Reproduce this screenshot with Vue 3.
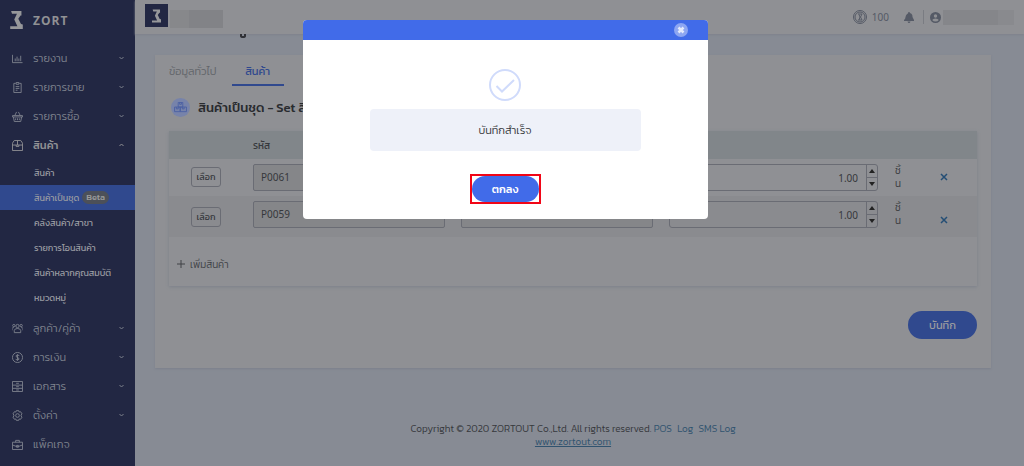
<script setup>
import { ref } from 'vue'

const mainMenu = [
  { label: 'รายงาน', icon: 'chart', open: false },
  { label: 'รายการขาย', icon: 'clip', open: false },
  { label: 'รายการซื้อ', icon: 'basket', open: false },
  { label: 'สินค้า', icon: 'box', open: true },
]
const subMenu = ['สินค้า', 'สินค้าเป็นชุด', 'คลังสินค้า/สาขา', 'รายการโอนสินค้า', 'สินค้าหลากคุณสมบัติ', 'หมวดหมู่']
const moreMenu = [
  { label: 'ลูกค้า/คู่ค้า', icon: 'people', arrow: true },
  { label: 'การเงิน', icon: 'money', arrow: true },
  { label: 'เอกสาร', icon: 'drawer', arrow: true },
  { label: 'ตั้งค่า', icon: 'gear', arrow: true },
  { label: 'แพ็คเกจ', icon: 'case', arrow: false },
]
const logoPath = 'M1 0h11.500v5h-1L9 8.500l3 6 2 .5v5H0v-3h8L4.500 9.500 7.500 3H2z'
const icons = {
  chart: 'M.5 2v8.500h11M3.500 9V6M5.500 9V4M7.500 9V6M9.500 9V3',
  clip: 'M4 1.500H2v10h8v-10H8M4.500.5h3v2h-3zM4 5h4M4 7h4M4 9h2',
  basket: 'M0.500 5h11v1.500h-11zM1.500 6.500l1 5h7l1-5M3 5l2-4M9 5L7 1M4 8v2M6 8v2M8 8v2',
  box: 'M2.500.5h7l2 3v8H.5v-8zM.5 5.500h11M6 .5v5M4.500 5.500v1.500h3V5.500',
  people: 'M6 1.500a1.800 1.800 0 1 1 0 3.600a1.800 1.800 0 1 1 0-3.600M2 1.500a1.300 1.300 0 1 1 0 2.600a1.300 1.300 0 1 1 0-2.600M10 1.500a1.300 1.300 0 1 1 0 2.600a1.300 1.300 0 1 1 0-2.600M2.500 10.500V8Q3 6 6 6t3.500 2v2.500zM0 8V6q0-1 2-1M12 8V6q0-1-2-1',
  money: 'M6 .5a5.500 5.500 0 1 1 0 11a5.500 5.500 0 1 1 0-11M8 4Q6 2.700 4.600 3.800Q4 5.500 6 6T7.600 8Q6 9.500 4 8M6 2.500v7',
  drawer: 'M.5.5h11v11H.5zM.5 4.500h11M.5 8h11M4.500 2.500h3M4.500 6.200h3M4.500 9.800h3',
  gear: 'M4.700.7h2.600l.5 1.500 1.600-.3 1.500 2.300-1 1.300v1l1 1.300-1.500 2.300-1.600-.3-.5 1.500H4.700l-.5-1.500-1.600.3L1.100 7.800l1-1.300v-1l-1-1.300 1.500-2.300 1.600.3zM6 4a2 2 0 1 1 0 4a2 2 0 1 1 0-4',
  case: 'M.5 3.500h11v8H.5zM4 3.500v-2h4v2M.5 6.500l4 1.500h3l4-1.500M5 7h2v2H5z',
}
const rows = ref([
  { code: 'P0061', name: '', qty: '1.00' },
  { code: 'P0059', name: '', qty: '1.00' },
])
const open = ref(true)
</script>

<template>
  <div class="app">
    <aside class="side">
      <a class="brand" href="#">
        <svg class="logo" viewBox="0 0 14 20"><path :d="logoPath" /></svg>
        <span>ZORT</span>
      </a>
      <nav>
        <a v-for="m in mainMenu" :key="m.label" href="#" class="item" :class="{ on: m.open }">
          <svg class="ico" viewBox="0 0 12 12"><path :d="icons[m.icon]" /></svg>
          <span>{{ m.label }}</span>
          <svg class="arrow" viewBox="0 0 5 4"><path :d="m.open ? 'M.5 3L2.500 1l2 2' : 'M.5 1l2 2 2-2'" /></svg>
        </a>
        <div class="subs">
          <a v-for="(s, i) in subMenu" :key="s" href="#" class="sub" :class="{ active: i === 1 }">
            {{ s }}<span v-if="i === 1" class="beta">Beta</span>
          </a>
        </div>
        <a v-for="m in moreMenu" :key="m.label" href="#" class="item">
          <svg class="ico" viewBox="0 0 12 12"><path :d="icons[m.icon]" /></svg>
          <span>{{ m.label }}</span>
          <svg v-if="m.arrow" class="arrow" viewBox="0 0 5 4"><path d="M.5 1l2 2 2-2" /></svg>
        </a>
      </nav>
    </aside>

    <div class="content">
      <header class="top">
        <span class="square"><svg class="logo" viewBox="0 0 14 20"><path :d="logoPath" /></svg></span>
        <span class="mask shop"></span>
        <span class="tools">
          <svg class="coin" viewBox="0 0 14 14"><circle cx="7" cy="7" r="6.500" /><circle cx="7" cy="7" r="5" /><path d="M5 4h4L7.500 7 9 10H5M6 4.500L7 7l-1 3" /></svg>
          <span class="credit">100</span>
          <svg class="bell" viewBox="0 0 10 11"><path d="M4.300 0h1.400v1C8 1.500 8.500 3 8.500 5t1.500 3v1H0V8q1.500-1 1.500-3T4.300 1zM3.500 9.500h3Q6 11 5 11T3.500 9.500" /></svg>
          <span class="bar"></span>
          <svg class="user" viewBox="0 0 11 11"><circle cx="5.500" cy="5.500" r="5.500" /><circle class="cut" cx="5.500" cy="4" r="1.700" /><path class="cut" d="M2.200 8Q3 6.400 5.500 6.400T8.800 8Q7.500 9.500 5.500 9.500T2.200 8" /></svg>
          <span class="mask"></span>
        </span>
      </header>

      <main>
        <div class="titlebar"><svg viewBox="0 0 8 4"><path d="M2 0v2q0 1 2 1t2-1V0" /></svg></div>
        <section class="card">
          <div class="tabs">
            <a href="#" class="tab">ข้อมูลทั่วไป</a>
            <a href="#" class="tab current">สินค้า</a>
          </div>
          <h2>
            <span class="round"><svg viewBox="0 0 14 12"><path d="M4.500.5h5v5h-5zM.5 5.500h6.200v5H.5zM6.700 5.500h6.800v5H6.700zM6 .5v2h2v-2M2.500 5.500v2h2v-2M9 5.500v2h2v-2" /></svg></span>
            สินค้าเป็นชุด - Set สินค้า
          </h2>
          <div class="panel">
            <table>
              <colgroup><col class="c1"><col class="c2"><col class="c2"><col><col class="c5"><col class="c6"></colgroup>
              <thead>
                <tr><th></th><th>รหัส</th><th></th><th></th><th></th><th></th></tr>
              </thead>
              <tbody>
                <tr v-for="r in rows" :key="r.code">
                  <td class="pick"><button type="button">เลือก</button></td>
                  <td><input v-model="r.code" class="field" readonly aria-label="รหัส"></td>
                  <td><input v-model="r.name" class="field" readonly aria-label="สินค้า"></td>
                  <td>
                    <div class="number">
                      <input v-model="r.qty" aria-label="จำนวน">
                      <span class="spin">
                        <button type="button" aria-label="เพิ่ม"><svg viewBox="0 0 6 4"><path d="M0 4l3-4 3 4z" /></svg></button>
                        <button type="button" aria-label="ลด"><svg viewBox="0 0 6 4"><path d="M0 0l3 4 3-4z" /></svg></button>
                      </span>
                    </div>
                  </td>
                  <td class="unit">ชิ้<br>น</td>
                  <td class="remove"><button type="button" aria-label="ลบ"><svg viewBox="0 0 8 8"><path d="M1 1l6 6M7 1l-6 6" /></svg></button></td>
                </tr>
              </tbody>
            </table>
            <button type="button" class="add"><svg viewBox="0 0 8 8"><path d="M4 0v8M0 4h8" /></svg>เพิ่มสินค้า</button>
          </div>
          <div class="actions"><button type="button" class="save">บันทึก</button></div>
        </section>
      </main>

      <footer>
        <p>Copyright © 2020 ZORTOUT Co.,Ltd. All rights reserved. <a href="#">POS</a> <a href="#" class="gap">Log</a> <a href="#" class="gap">SMS Log</a></p>
        <p><a href="#" class="site">www.zortout.com</a></p>
      </footer>
    </div>

    <div v-if="open" class="overlay">
      <div class="dialog" role="dialog" aria-modal="true">
        <div class="bluebar">
          <button type="button" class="close" aria-label="ปิด" @click="open = false"><svg viewBox="0 0 8 8"><path d="M1.500 1.500l5 5M6.500 1.500l-5 5" /></svg></button>
        </div>
        <div class="body">
          <svg class="check" viewBox="0 0 32 32"><circle cx="16" cy="16" r="15" /><path d="M7.500 17l5.500 5.500L25 11" /></svg>
          <p class="msg">บันทึกสำเร็จ</p>
          <span class="frame"><button type="button" class="ok" @click="open = false">ตกลง</button></span>
        </div>
      </div>
    </div>
  </div>
</template>

<style>
body { margin: 0; background: #878b94; }
</style>

<style scoped>
* { box-sizing: border-box; }
.app { display: grid; grid-template-columns: 135px 1fr; min-height: 100vh; font-family: Kanit, Prompt, "Noto Sans Thai", "Open Sans", "Noto Sans", sans-serif; font-size: 11px; font-weight: 300; color: #36383c; }
a { color: inherit; text-decoration: none; }
button, input { font: inherit; color: inherit; padding: 0; margin: 0; }
button { cursor: pointer; }
svg { display: block; flex: none; fill: none; stroke: currentColor; }
p, h2 { margin: 0; }

.side { background: #222743; color: #7d818c; }
.brand { display: flex; align-items: center; gap: 10px; height: 44px; padding: 0 0 4px 10px; font: 700 12px "Open Sans", sans-serif; letter-spacing: 1px; color: #909194; }
.logo { width: 13px; height: 18px; fill: #96979a; stroke: none; }
.item { display: flex; align-items: center; height: 29px; padding: 0 11px 1px 12px; gap: 10px; font-size: 11px; white-space: nowrap; }
.item.on { color: #909194; font-weight: 500; }
.ico { width: 11px; height: 11px; }
.arrow { width: 5px; height: 4px; margin-left: auto; }
.subs { padding-bottom: 4px; }
.sub { display: flex; align-items: center; height: 25px; padding-left: 34px; font-size: 9px; font-weight: 400; white-space: nowrap; color: #9a9ca2; }
.sub.active { background: #30498e; }
.beta { margin-left: 3px; padding: 0 4px; line-height: 13px; font-size: 9px; font-weight: 500; border-radius: 7px; background: #4c5059; color: #999a9b; }

.content { min-width: 0; background: #878b94; }
.top { display: flex; align-items: center; height: 34px; padding: 0 10px; background: #8f9094; box-shadow: 0 1px 2px #7e828b; }
.square { display: grid; place-items: center; width: 23px; height: 23px; margin-bottom: 3px; background: #222743; }
.square .logo { width: 9px; height: 14px; }
.mask { width: 71px; height: 15px; background: linear-gradient(90deg, #85868a 78%, #898a8e 78%); }
.shop { width: 53px; height: 18px; margin: 3px 0 0 2px; background: linear-gradient(90deg, #87888b 36%, #828387 36%); }
.tools { display: flex; align-items: center; margin-left: auto; color: #555a66; }
.coin { width: 14px; height: 14px; stroke-width: 1; }
.credit { margin: 0 15px 0 5px; font: 400 10px "Noto Sans", sans-serif; }
.bell { width: 10px; height: 11px; fill: currentColor; stroke: none; }
.bar { width: 1px; height: 14px; margin: 0 6px 0 9px; background: #7a7c82; }
.user { width: 11px; height: 11px; fill: currentColor; stroke: none; margin-right: 2px; }
.cut { fill: #8f9094; }

main { padding: 0 33px 0 20px; }
.titlebar { height: 21px; padding-left: 84px; color: #303136; }
.titlebar svg { width: 8px; height: 4px; stroke-width: 2; }
.card { padding: 0 14px 29px; background: #8f9094; box-shadow: 0 1px 2px #7c808c; }
.tabs { display: flex; gap: 15px; height: 31px; }
.tab { line-height: 32px; color: #62656a; white-space: nowrap; }
.tab.current { width: 52px; text-align: center; color: #30498e; border-bottom: 2px solid #30498e; font-weight: 400; }
h2 { display: flex; align-items: center; gap: 8px; height: 45px; padding: 0 0 3px 2px; font-size: 13px; font-weight: 500; color: #292b2f; white-space: nowrap; }
.round { display: grid; place-items: center; width: 19px; height: 19px; border-radius: 50%; background: #7783aa; color: #4c60a3; }
.round svg { width: 13px; height: 11px; }
.panel { box-shadow: 0 1px 3px #7c808a; }
table { width: 100%; table-layout: fixed; border-collapse: collapse; }
.c1 { width: 76px; }
.c2 { width: 25.75%; }
.c5 { width: 25px; }
.c6 { width: 66px; }
th { height: 28px; padding: 0 8px; text-align: left; font-weight: 400; font-size: 10px; background: #81868a; }
td { padding: 5px 8px; height: 37px; vertical-align: top; }
tbody tr:nth-child(2) { background: #8a8b8f; }
tbody tr:nth-child(2) td { height: 41px; }
.pick { padding: 8px 8px 0 22px; }
tbody tr:nth-child(2) .pick { padding-top: 11px; }
.pick button { display: block; width: 30px; height: 20px; font-size: 9px; font-weight: 400; line-height: 18px; border: 1px solid #6a6c74; border-radius: 3px; background: none; white-space: nowrap; }
.field { display: block; width: 100%; height: 27px; padding: 0 7px 2px; border: 1px solid #6a6c74; border-radius: 2px; background: #858689; font: 400 10px "Noto Sans", sans-serif; outline: 0; }
.number { display: flex; height: 27px; border: 1px solid #6a6c74; border-radius: 3px; }
.number input { flex: 1; min-width: 0; padding-right: 8px; border: 0; background: none; text-align: right; font: 400 10px "Noto Sans", sans-serif; outline: 0; }
.spin { display: flex; flex-direction: column; width: 11px; border-left: 1px solid #6a6c74; }
.spin button { flex: 1; display: grid; place-items: center; border: 0; background: none; color: #222; }
.spin button + button { border-top: 1px solid #6a6c74; }
.spin svg { width: 6px; height: 4px; fill: currentColor; stroke: none; }
.unit { padding: 5px 0 0 9px; font-size: 10px; line-height: 13px; }
.remove { padding: 14px 0 0; }
tbody tr:nth-child(2) .remove { padding-top: 20px; }
.remove button { display: block; margin: 0 auto; border: 0; background: none; color: #244e75; }
.remove svg { width: 8px; height: 8px; stroke-width: 1.5; }
.add { display: flex; align-items: center; gap: 5px; height: 49px; padding: 5px 0 0 8px; border: 0; background: none; font-size: 10px; color: #404246; white-space: nowrap; }
.add svg { width: 8px; height: 8px; }
.actions { display: flex; justify-content: flex-end; padding-top: 25px; }
.save { width: 69px; height: 28px; border: 0; border-radius: 14px; background: #30498e; color: #9a9b9f; font-weight: 400; }
footer { padding: 54px 13px 18px 0; text-align: center; line-height: 13px; font-size: 10px; }
footer a { color: #30536f; }
.gap { margin-left: 3px; }
.site { text-decoration: underline; }

.overlay { position: fixed; inset: 0; display: flex; justify-content: center; align-items: flex-start; padding: 20px 14px 0 0; }
.dialog { width: 405px; border-radius: 4px; overflow: hidden; background: #fff; }
.bluebar { display: flex; justify-content: flex-end; align-items: center; height: 20px; padding-right: 20px; background: #416be9; }
.close { display: grid; place-items: center; width: 14px; height: 14px; border: 0; border-radius: 50%; background: #8da6f2; color: #e4eafc; }
.close svg { width: 8px; height: 8px; stroke-width: 2.5; }
.body { display: flex; flex-direction: column; align-items: center; padding: 29px 67px 15px; }
.check { width: 32px; height: 32px; color: #d0dbfb; stroke-width: 2; }
.msg { width: 100%; margin: 8px 0 23px; border-radius: 4px; background: #eef1f9; text-align: center; line-height: 42px; color: #37383c; font-size: 11px; }
.frame { display: block; border: 2px solid #f10617; }
.ok { display: block; width: 67px; height: 26px; border: 0; border-radius: 13px; background: #416be9; color: #fff; font-weight: 500; font-size: 11px; }
</style>
